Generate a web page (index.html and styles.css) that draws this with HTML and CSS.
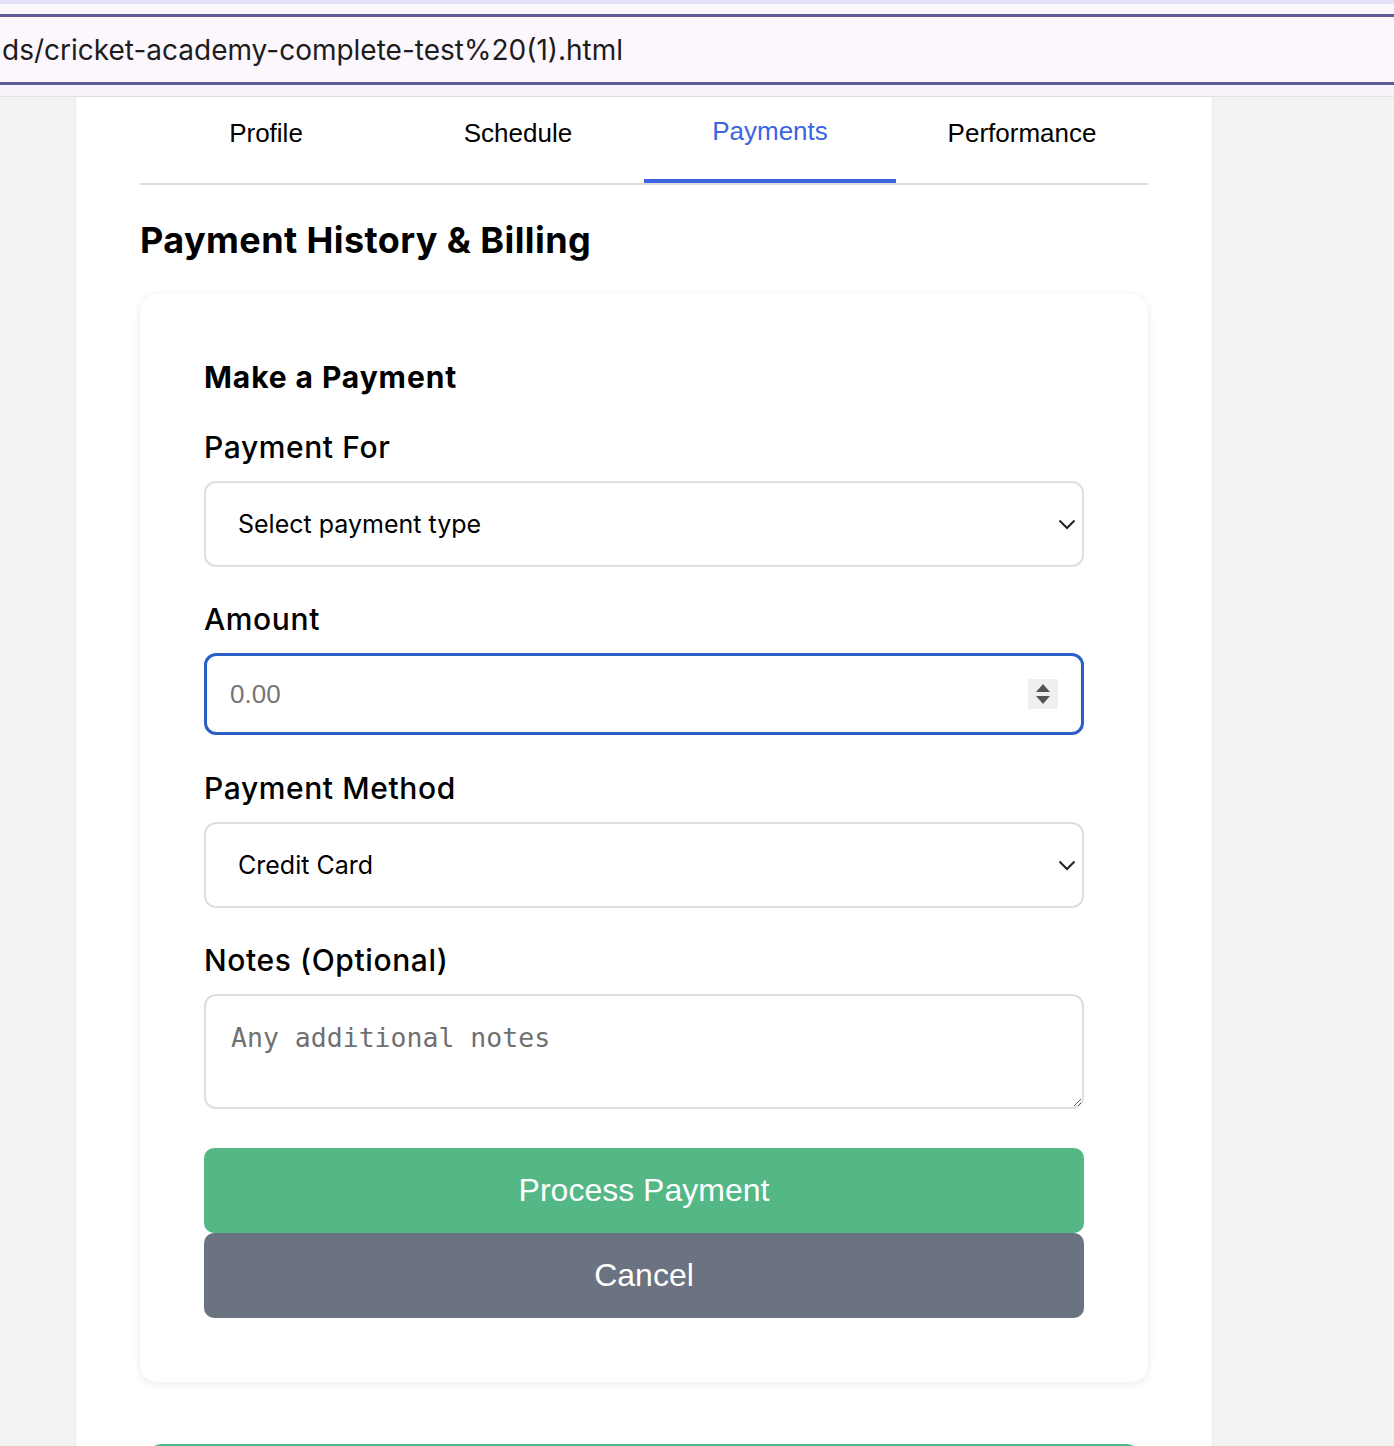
FILE: index.html
```html
<!DOCTYPE html>
<html lang="en">
<head>
<meta charset="utf-8">
<title>Cricket Academy - Payments</title>
<link rel="stylesheet" href="styles.css">
</head>
<body>
<header class="chrome">
  <div class="chrome-top"></div>
  <div class="urlbar">ds/cricket-academy-complete-test%20(1).html</div>
  <div class="chrome-bottom"></div>
</header>
<div class="page">
  <main class="container">
    <nav class="tabs">
      <button class="tab">Profile</button>
      <button class="tab">Schedule</button>
      <button class="tab active">Payments</button>
      <button class="tab">Performance</button>
    </nav>

    <h2 class="section-title">Payment History &amp; Billing</h2>

    <section class="card">
      <h3 class="card-title">Make a Payment</h3>

      <div class="field">
        <label class="label" for="ptype">Payment For</label>
        <div class="select-wrap">
          <select id="ptype" class="control select">
            <option>Select payment type</option>
          </select>
          <svg class="chev" width="18" height="11" viewBox="0 0 18 11"><path d="M1.5 1.5 L9 9 L16.5 1.5" fill="none" stroke="#222" stroke-width="2"/></svg>
        </div>
      </div>

      <div class="field">
        <label class="label" for="amount">Amount</label>
        <div class="number-box">
          <input id="amount" class="number-input" type="text" placeholder="0.00">
          <span class="spinner">
            <svg width="16" height="26" viewBox="0 0 16 26"><path d="M1 11 L8 3 L15 11 Z" fill="#555"/><path d="M1 15 L8 23 L15 15 Z" fill="#555"/></svg>
          </span>
        </div>
      </div>

      <div class="field">
        <label class="label" for="pmethod">Payment Method</label>
        <div class="select-wrap">
          <select id="pmethod" class="control select">
            <option>Credit Card</option>
          </select>
          <svg class="chev" width="18" height="11" viewBox="0 0 18 11"><path d="M1.5 1.5 L9 9 L16.5 1.5" fill="none" stroke="#222" stroke-width="2"/></svg>
        </div>
      </div>

      <div class="field last">
        <label class="label" for="notes">Notes (Optional)</label>
        <textarea id="notes" class="control textarea" placeholder="Any additional notes"></textarea>
      </div>

      <div class="actions">
        <button class="btn btn-green">Process Payment</button>
        <button class="btn btn-gray">Cancel</button>
      </div>
    </section>

    <div class="next-card"></div>
  </main>
</div>
</body>
</html>
```

FILE: styles.css
```css
* { box-sizing: border-box; }
html, body { margin: 0; padding: 0; }
body {
  background: #f3f3f3;
  font-family: Inter, "Noto Sans", sans-serif;
  color: #000;
  height: 1446px;
  overflow: hidden;
}

/* browser chrome strip */
.chrome { background: #fbf7fd; }
.chrome-top {
  height: 14px;
  border-top: 4px solid #e4e0f5;
  background: #fbf7fd;
}
.urlbar {
  height: 71px;
  border-top: 3px solid #5f5a98;
  border-bottom: 3px solid #5f5a98;
  background: #fcf6fd;
  padding-left: 2px;
  display: flex;
  align-items: center;
  font-family: Inter, sans-serif;
  font-size: 28px;
  color: #1c1c1c;
  letter-spacing: 0;
}
.chrome-bottom {
  height: 12px;
  background: #f8f3fa;
  border-bottom: 1px solid #e6e0ea;
}

.page {
  display: flex;
  justify-content: flex-start;
  padding-left: 76px;
}
.container {
  width: 1136px;
  background: #fff;
  padding: 0 64px;
  min-height: 1400px;
  box-shadow: 0 0 4px rgba(0,0,0,0.05);
}

/* tabs */
.tabs {
  display: grid;
  grid-template-columns: repeat(4, 1fr);
  border-bottom: 2px solid #dcdcdc;
}
.tab {
  height: 86px;
  border: 0;
  background: transparent;
  font-family: "Liberation Sans", Arial, sans-serif;
  font-size: 26px;
  color: #000;
  display: flex;
  align-items: center;
  justify-content: center;
  padding: 0;
  padding-bottom: 14px;
}
.tab.active {
  color: #3b65e0;
  border-bottom: 4px solid #3b65e0;
  padding-bottom: 14px;
}

.section-title {
  margin: 34px 0 32px;
  font-size: 36px;
  line-height: 43px;
  font-weight: 700;
  letter-spacing: 0.4px;
}

/* card */
.card {
  background: #fff;
  border-radius: 16px;
  box-shadow: 0 2px 8px rgba(0,0,0,0.08), 0 0 1px rgba(0,0,0,0.06);
  padding: 65px 64px 64px;
}
.card-title {
  margin: 0 0 34px;
  font-size: 30px;
  line-height: 36px;
  font-weight: 700;
  letter-spacing: 0.9px;
}
.field { display: flex; flex-direction: column; margin-bottom: 34px; }
.field.last { margin-bottom: 39px; }
.label {
  font-size: 30px;
  line-height: 36px;
  font-weight: 500;
  margin-bottom: 16px;
  letter-spacing: 0.6px;
}

.select-wrap { position: relative; }
.control {
  width: 100%;
  border: 2px solid #dedede;
  border-radius: 12px;
  background: #fff;
  color: #000;
}
.select {
  -webkit-appearance: none;
  appearance: none;
  height: 86px;
  padding: 0 32px;
  font-family: Inter, sans-serif;
  font-size: 25px;
  outline: none;
}
.chev {
  position: absolute;
  right: 8px;
  top: 38px;
  pointer-events: none;
}

.number-box {
  display: flex;
  align-items: center;
  height: 82px;
  border: 3px solid #2b5fc8;
  border-radius: 12px;
  padding: 0 23px 0 23px;
  margin-bottom: 1px;
}
.number-input {
  flex: 1;
  border: 0;
  outline: none;
  font-family: "Liberation Sans", Arial, sans-serif;
  font-size: 26px;
  padding: 0;
  background: transparent;
}
.number-input::placeholder { color: #767676; }
.spinner {
  width: 30px;
  height: 30px;
  background: #efefef;
  display: flex;
  align-items: center;
  justify-content: center;
}

.textarea {
  height: 115px;
  padding: 26px 25px 0;
  font-family: "DejaVu Sans Mono", monospace;
  font-size: 26.5px;
  resize: vertical;
  outline: none;
}
.textarea::placeholder { color: #707070; }

.actions { display: flex; flex-direction: column; }
.btn {
  height: 85px;
  border: 0;
  border-radius: 10px;
  color: #fff;
  font-family: "Liberation Sans", Arial, sans-serif;
  font-size: 32px;
}
.btn-green { background: #53b786; position: relative; z-index: 1; }
.btn-gray { background: #6b7280; }

.next-card {
  margin: 62px 6px 0;
  height: 40px;
  border-top: 3px solid #53b786;
  border-radius: 16px 16px 0 0;
}
```
